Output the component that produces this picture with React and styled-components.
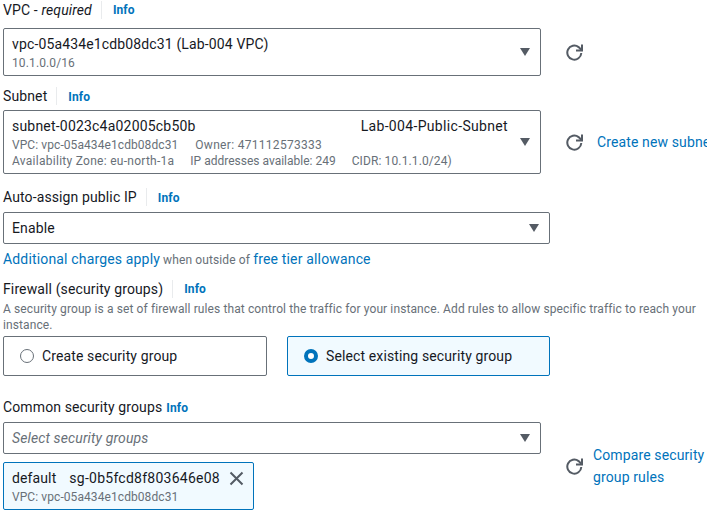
import React from 'react';
import styled, { createGlobalStyle } from 'styled-components';

const GlobalStyle = createGlobalStyle`
  html, body {
    margin: 0;
    padding: 0;
    background: #fff;
    overflow: hidden;
  }
  body {
    font-family: Roboto, "Noto Sans", sans-serif;
    color: #16191f;
    letter-spacing: 0.12px;
  }
`;

const Page = styled.div`
  width: 707px;
  height: 515px;
  overflow: hidden;
  box-sizing: border-box;
  padding-left: 3px;
`;

const LabelRow = styled.div`
  display: flex;
  align-items: center;
  height: 18px;
  margin-top: ${(p) => p.$top}px;
  margin-bottom: ${(p) => p.$bottom}px;
  font-size: 14px;
  line-height: 18px;
  white-space: nowrap;
`;

const Divider = styled.span`
  width: 1px;
  height: 18px;
  background: #e9ebed;
  margin: 0 11px 0 9px;
`;

const InfoLink = styled.a`
  font-size: 12px;
  font-weight: 700;
  color: #0073bb;
  margin-left: ${(p) => p.$left || 0}px;
  padding-top: ${(p) => (p.$drop ? 2 : 0)}px;
`;

const FieldRow = styled.div`
  display: flex;
  align-items: center;
  white-space: nowrap;
`;

const Select = styled.div`
  position: relative;
  box-sizing: border-box;
  width: ${(p) => p.$width || 538}px;
  height: ${(p) => p.$height}px;
  flex: none;
  border: 1px solid #687078;
  border-radius: 2px;
  padding: 6px 8px 0;
  font-size: 14px;
  line-height: 18px;
`;

const Caret = styled.span`
  position: absolute;
  right: 10px;
  top: 50%;
  margin-top: -4px;
  width: 0;
  height: 0;
  border-left: 5.5px solid transparent;
  border-right: 5.5px solid transparent;
  border-top: 8px solid #545b64;
`;

const MainLine = styled.div`
  display: flex;
  justify-content: space-between;
  padding-right: 24px;
  margin-bottom: 2px;
`;

const MainPart = styled.span`
  letter-spacing: ${(p) => p.$track || 0.14}px;
`;

const SubRow = styled.div`
  display: flex;
  gap: ${(p) => p.$gap || 0}px;
  font-size: 12px;
  line-height: 16px;
  color: #687078;
`;

const SubPart = styled.span`
  letter-spacing: ${(p) => p.$track || 0}px;
`;

const RefreshWrap = styled.span`
  display: flex;
  flex: none;
  margin-left: 25px;
  color: #545b64;
`;

const ActionLink = styled.a`
  margin-left: ${(p) => p.$left}px;
  font-size: 14px;
  line-height: 22px;
  color: #0073bb;
`;

const HelpLine = styled.div`
  margin-top: 6px;
  height: 18px;
  font-size: 12px;
  line-height: 18px;
  color: #687078;
  white-space: nowrap;
`;

const HelpLink = styled.a`
  font-size: 14px;
  letter-spacing: 0.16px;
  color: #0073bb;
`;

const Description = styled.div`
  width: 700px;
  font-size: 12px;
  line-height: 16px;
  letter-spacing: 0.11px;
  color: #687078;
`;

const CardRow = styled.div`
  display: flex;
  gap: 20px;
  margin-top: 3px;
`;

const RadioCard = styled.label`
  display: flex;
  align-items: center;
  gap: 8px;
  box-sizing: border-box;
  width: ${(p) => p.$width}px;
  height: 40px;
  padding-left: 16px;
  border: 1px solid ${(p) => (p.$active ? '#0073bb' : '#687078')};
  border-radius: 2px;
  background: ${(p) => (p.$active ? '#f1faff' : '#fff')};
  font-size: 14px;
`;

const RadioDot = styled.span`
  box-sizing: border-box;
  width: 14px;
  height: 14px;
  border-radius: 50%;
  border: ${(p) => (p.$active ? '4.5px solid #0073bb' : '1px solid #687078')};
  background: #fff;
`;

const Placeholder = styled.span`
  font-style: italic;
  color: #687078;
`;

const Token = styled.div`
  position: relative;
  box-sizing: border-box;
  width: 251px;
  height: 48px;
  margin-top: 8px;
  padding: 6px 8px 0;
  border: 1px solid #0073bb;
  border-radius: 2px;
  background: #f1faff;
  font-size: 14px;
  line-height: 18px;
`;

const TokenName = styled.span`
  margin-right: 13px;
`;

const TokenClose = styled.span`
  position: absolute;
  right: 9px;
  top: 8px;
  display: flex;
  color: #545b64;
`;

const GroupColumn = styled.div`
  flex: none;
`;

const RefreshIcon = () => (
  <RefreshWrap>
    <svg width="17" height="17" viewBox="0 0 17 17" fill="none" stroke="currentColor" strokeWidth="2">
      <path d="M15.3 9A7 7 0 1 1 12.6 3.1L16 6.5" />
      <path d="M16 .5v6h-6" />
    </svg>
  </RefreshWrap>
);

const App = () => (
  <Page>
    <GlobalStyle />
    <LabelRow $top={1} $bottom={9}>
      <span>VPC - <i>required</i></span>
      <Divider />
      <InfoLink>Info</InfoLink>
    </LabelRow>
    <FieldRow>
      <Select $height={48}>
        <MainLine><MainPart>vpc-05a434e1cdb08dc31 (Lab-004 VPC)</MainPart></MainLine>
        <SubRow>10.1.0.0/16</SubRow>
        <Caret />
      </Select>
      <RefreshIcon />
    </FieldRow>
    <LabelRow $top={11} $bottom={5}>
      <span>Subnet</span>
      <Divider />
      <InfoLink $drop>Info</InfoLink>
    </LabelRow>
    <FieldRow>
      <Select $height={64}>
        <MainLine>
          <MainPart $track={0.2}>subnet-0023c4a02005cb50b</MainPart>
          <MainPart $track={0.33}>Lab-004-Public-Subnet</MainPart>
        </MainLine>
        <SubRow $gap={17}>
          <SubPart $track={0.08}>VPC: vpc-05a434e1cdb08dc31</SubPart>
          <SubPart $track={0.3}>Owner: 471112573333</SubPart>
        </SubRow>
        <SubRow $gap={16}>
          <SubPart $track={0.27}>Availability Zone: eu-north-1a</SubPart>
          <SubPart>IP addresses available: 249</SubPart>
          <SubPart $track={0.12}>CIDR: 10.1.1.0/24)</SubPart>
        </SubRow>
        <Caret />
      </Select>
      <RefreshIcon />
      <ActionLink $left={14}>Create new subnet</ActionLink>
    </FieldRow>
    <LabelRow $top={14} $bottom={6}>
      <span>Auto-assign public IP</span>
      <Divider />
      <InfoLink $drop>Info</InfoLink>
    </LabelRow>
    <Select $width={547} $height={32}>
      Enable
      <Caret />
    </Select>
    <HelpLine>
      <HelpLink>Additional charges apply</HelpLink> when outside of <HelpLink>free tier allowance</HelpLink>
    </HelpLine>
    <LabelRow $top={12} $bottom={3}>
      <span>Firewall (security groups)</span>
      <Divider />
      <InfoLink>Info</InfoLink>
    </LabelRow>
    <Description>
      A security group is a set of firewall rules that control the traffic for your instance. Add rules to allow specific traffic to reach your instance.
    </Description>
    <CardRow>
      <RadioCard $width={264}>
        <RadioDot />
        Create security group
      </RadioCard>
      <RadioCard $width={263} $active>
        <RadioDot $active />
        Select existing security group
      </RadioCard>
    </CardRow>
    <LabelRow $top={22} $bottom={6}>
      <span>Common security groups</span>
      <InfoLink $left={4} $drop>Info</InfoLink>
    </LabelRow>
    <FieldRow>
      <GroupColumn>
        <Select $height={32}>
          <Placeholder>Select security groups</Placeholder>
          <Caret />
        </Select>
        <Token>
          <MainLine>
            <span><TokenName>default</TokenName><MainPart $track={0.25}>sg-0b5fcd8f803646e08</MainPart></span>
          </MainLine>
          <SubRow><SubPart $track={0.08}>VPC: vpc-05a434e1cdb08dc31</SubPart></SubRow>
          <TokenClose>
            <svg width="15" height="15" viewBox="0 0 15 15" fill="none" stroke="currentColor" strokeWidth="2">
              <path d="M1.5 1.5l12 12M13.5 1.5l-12 12" />
            </svg>
          </TokenClose>
        </Token>
      </GroupColumn>
      <RefreshIcon />
      <ActionLink $left={10}>Compare security<br />group rules</ActionLink>
    </FieldRow>
  </Page>
);

export default App;
